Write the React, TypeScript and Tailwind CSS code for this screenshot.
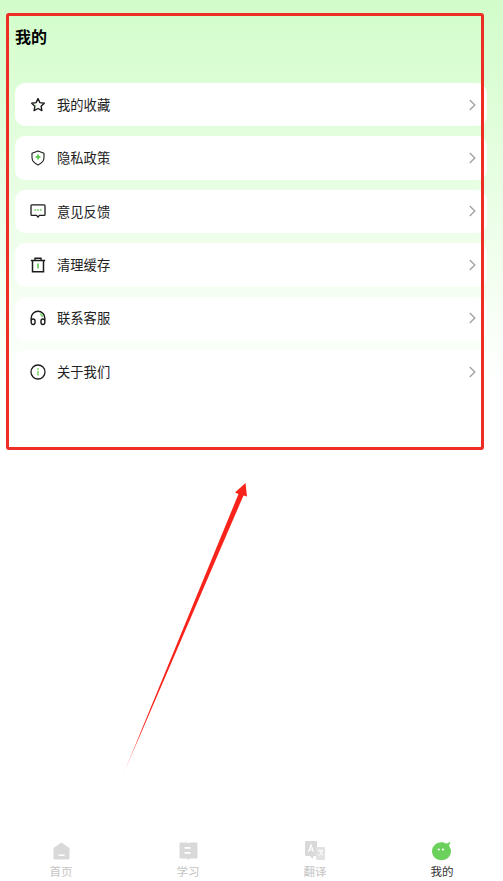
import React from "react";

const GREEN = "#7ed36f";
const INK = "#1c1c1c";

const StarIcon = () => (
  <svg width="16" height="16" viewBox="0 0 16 16" fill="none">
    <path d="M8 1.600l1.900 4 4.400.6-3.200 3 .8 4.400L8 11.500l-3.900 2.100.8-4.400-3.200-3 4.400-.6z" stroke={INK} strokeWidth="1.400" strokeLinejoin="round" />
    <circle cx="5.600" cy="8.800" r="0.9" fill={GREEN} />
  </svg>
);

const ShieldIcon = () => (
  <svg width="16" height="16" viewBox="0 0 16 16" fill="none">
    <path d="M8 1l6 2.200v4.400c0 3.400-2.600 5.900-6 7.300-3.400-1.400-6-3.900-6-7.300V3.200z" stroke={INK} strokeWidth="1.100" strokeLinejoin="round" />
    <path d="M8 4.600v4.800M5.600 7h4.800" stroke="#5ec850" strokeWidth="1.800" />
  </svg>
);

const ChatIcon = () => (
  <svg width="16" height="16" viewBox="0 0 16 16" fill="none">
    <path d="M2 1.800h12c.6 0 1 .4 1 1v8.600c0 .6-.4 1-1 1H9.400L8 14.200l-1.400-1.800H2c-.6 0-1-.4-1-1V2.800c0-.6.4-1 1-1z" stroke={INK} strokeWidth="1.300" strokeLinejoin="round" />
    <circle cx="5.200" cy="7" r="1" fill={GREEN} />
    <circle cx="8" cy="7" r="1" fill={GREEN} />
    <circle cx="10.800" cy="7" r="1" fill={GREEN} />
  </svg>
);

const TrashIcon = () => (
  <svg width="16" height="16" viewBox="0 0 16 16" fill="none">
    <path d="M.8 3.500h14.400M5 3.300V1.300h6v2" stroke={INK} strokeWidth="1.400" />
    <path d="M2.500 3.500V14.800h11V3.500" stroke={INK} strokeWidth="1.500" />
    <path d="M8 6.500v5" stroke={GREEN} strokeWidth="2" />
  </svg>
);

const HeadsetIcon = () => (
  <svg width="16" height="16" viewBox="0 0 16 16" fill="none">
    <path d="M1.200 10.500V8a6.800 6.800 0 0 1 13.600 0v2.500" stroke={INK} strokeWidth="1.400" />
    <path d="M10.500 3.500l2.400 3.500" stroke={GREEN} strokeWidth="1.800" />
    <rect x="1.200" y="9" width="3.800" height="5.500" rx="1.900" stroke={INK} strokeWidth="1.400" />
    <rect x="11" y="9" width="3.800" height="5.500" rx="1.900" stroke={INK} strokeWidth="1.400" />
  </svg>
);

const InfoIcon = () => (
  <svg width="16" height="16" viewBox="0 0 16 16" fill="none">
    <circle cx="8" cy="8" r="7" stroke={INK} strokeWidth="1.300" />
    <circle cx="8" cy="5" r="0.9" fill={GREEN} />
    <path d="M8 7v4.500" stroke={GREEN} strokeWidth="1.600" />
  </svg>
);

const Chevron = () => (
  <svg width="7" height="12" viewBox="0 0 7 12" fill="none" className="ml-auto mr-[8px]">
    <path d="M.8 1l5 5-5 5" stroke="#a3a3a3" strokeWidth="1.400" />
  </svg>
);

const menu = [
  { label: "我的收藏", icon: <StarIcon /> },
  { label: "隐私政策", icon: <ShieldIcon /> },
  { label: "意见反馈", icon: <ChatIcon /> },
  { label: "清理缓存", icon: <TrashIcon /> },
  { label: "联系客服", icon: <HeadsetIcon /> },
  { label: "关于我们", icon: <InfoIcon /> },
];

const HomeTab = () => (
  <svg width="17" height="18" viewBox="0 0 17 18">
    <path d="M8.500 .5L16.500 6v10.500a1 1 0 0 1-1 1h-14a1 1 0 0 1-1-1V6z" fill="#d9d9d9" />
    <rect x="5.500" y="12.500" width="6" height="1.500" fill="#ffffff" />
  </svg>
);

const BookTab = () => (
  <svg width="19" height="18" viewBox="0 0 19 18">
    <path d="M1.500 .5H8.500L9.500 1.500 10.500 .5H17.500A1 1 0 0 1 18.500 1.500V15.500A1 1 0 0 1 17.500 16.500H11L9.500 18 8 16.500H1.500A1 1 0 0 1 .5 15.500V1.500A1 1 0 0 1 1.500 .5Z" fill="#d9d9d9" />
    <rect x="5.500" y="5" width="6" height="1.800" fill="#ffffff" />
    <rect x="5.500" y="10" width="6" height="1.800" fill="#ffffff" />
  </svg>
);

const TranslateTab = () => (
  <svg width="20" height="20" viewBox="0 0 20 20">
    <rect x="0" y="0" width="12" height="15" rx="1" fill="#d9d9d9" />
    <path d="M3.500 11L6 4l2.500 7M4.500 8.800h3" stroke="#ffffff" strokeWidth="1.100" fill="none" />
    <rect x="11" y="6" width="9" height="13" rx="1" fill="#e2e2e2" />
    <path d="M13 9.500h5M15 9.500c.3 2.500 1.500 4 3 5M17.500 9.500c-.4 2.500-2 4-4 5" stroke="#ffffff" strokeWidth="0.900" fill="none" />
    <path d="M5 15l2.500 3 1-3z" fill="#d9d9d9" />
  </svg>
);

const MineTab = () => (
  <svg width="20" height="20" viewBox="0 0 20 20">
    <path d="M9.500 1.200c1.800 0 3.400.5 4.700 1.500L18.600.8 17 5c1.200 1.500 2 3.200 2 5.200 0 5-4.200 9-9.500 9S0 15.200 0 10.200 4.200 1.200 9.500 1.200z" fill="#6bd15c" />
    <circle cx="6.800" cy="8.500" r="1.100" fill="#ffffff" />
    <circle cx="11" cy="8.500" r="1.100" fill="#ffffff" />
  </svg>
);

const tabs = [
  { label: "首页", icon: <HomeTab />, active: false },
  { label: "学习", icon: <BookTab />, active: false },
  { label: "翻译", icon: <TranslateTab />, active: false },
  { label: "我的", icon: <MineTab />, active: true },
];

export default function App() {
  return (
    <div className="relative flex h-[881px] w-[503px] flex-col overflow-hidden bg-white font-['Noto_Sans_CJK_SC',sans-serif]">
      <main className="flex-1 bg-gradient-to-b from-[#d2fdca] to-white to-[46%]">
        <h1 className="pl-[15px] pt-[25px] text-[16px] font-bold leading-[22px] text-black">我的</h1>
        <ul className="mt-[36px] flex flex-col gap-[10px] pl-[15px] pr-[16px]">
          {menu.map((item) => (
            <li key={item.label} className="flex h-[43.4px] items-center rounded-[10px] bg-white pl-[15px] pr-[3px]">
              <span className="flex w-[27px] shrink-0">{item.icon}</span>
              <span className="text-[13.300px] text-[#222222]">{item.label}</span>
              <Chevron />
            </li>
          ))}
        </ul>
      </main>

      {/* Bottom tabs */}
      <nav className="-mx-[2.500px] grid h-[41px] grid-cols-4">
        {tabs.map((tab) => (
          <div key={tab.label} className="flex flex-col items-center">
            <span className="flex h-[22px] items-center">{tab.icon}</span>
            <span className={`text-[11.500px] leading-[18px] ${tab.active ? "text-[#333333]" : "text-[#c4c4c4]"}`}>{tab.label}</span>
          </div>
        ))}
      </nav>

      {/* Annotation overlay: red box and arrow */}
      <div className="absolute left-[6px] top-[13px] h-[437px] w-[478px] rounded-[3px] border-[3px] border-[#ee2d24]" />
      <svg className="absolute left-[110px] top-[470px]" width="150" height="320" viewBox="0 0 150 320">
        <defs>
          <linearGradient id="arrowFade" x1="13" y1="305" x2="30" y2="262" gradientUnits="userSpaceOnUse">
            <stop offset="0" stopColor="#ff2a1a" stopOpacity="0.3" />
            <stop offset="1" stopColor="#f8231a" />
          </linearGradient>
        </defs>
        <path d="M13 305L128.500 24 125 22.500 135.500 13 137 26.500 133.500 25.500Z" fill="url(#arrowFade)" />
      </svg>
    </div>
  );
}
